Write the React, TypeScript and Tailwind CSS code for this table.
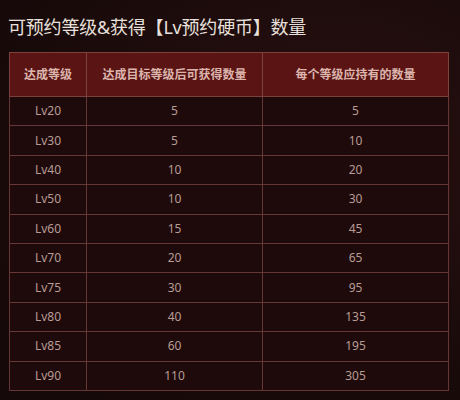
const rows: [string, string, string][] = [
  ["Lv20", "5", "5"],
  ["Lv30", "5", "10"],
  ["Lv40", "10", "20"],
  ["Lv50", "10", "30"],
  ["Lv60", "15", "45"],
  ["Lv70", "20", "65"],
  ["Lv75", "30", "95"],
  ["Lv80", "40", "135"],
  ["Lv85", "60", "195"],
  ["Lv90", "110", "305"],
];

export default function App() {
  return (
    <div
      className="w-[460px] h-[400px] overflow-hidden bg-[#1b0b0b] bg-[radial-gradient(ellipse_at_70%_40%,#2a1010_0%,#1b0b0b_60%,#140808_100%)]"
      style={{ fontFamily: '"Noto Sans", "Noto Sans CJK SC", sans-serif' }}
    >
      <h1 className="pl-[8px] pt-[14px] h-[52px] text-[18px] leading-[26px] text-[#e8e0dc] tracking-[-0.2px]">
        可预约等级&amp;获得【Lv预约硬币】数量
      </h1>
      <table className="ml-[9px] w-[440px] border-collapse table-fixed text-center">
        <colgroup>
          <col className="w-[77px]" />
          <col className="w-[176px]" />
          <col />
        </colgroup>
        <thead>
          <tr className="h-[44px] bg-[#5a1414]">
            <th className="border border-[#7e403c] text-[12px] font-semibold text-[#dcb4ac]">达成等级</th>
            <th className="border border-[#7e403c] text-[12px] font-semibold text-[#dcb4ac]">达成目标等级后可获得数量</th>
            <th className="border border-[#7e403c] text-[12px] font-semibold text-[#dcb4ac]">每个等级应持有的数量</th>
          </tr>
        </thead>
        <tbody className="bg-[#1e0a0a]">
          {rows.map((r) => (
            <tr key={r[0]} className="h-[29.4px]">
              {r.map((c, i) => (
                <td key={i} className="border border-[#663636] text-[12px] text-[#b89c96]">
                  {c}
                </td>
              ))}
            </tr>
          ))}
        </tbody>
      </table>
    </div>
  );
}
